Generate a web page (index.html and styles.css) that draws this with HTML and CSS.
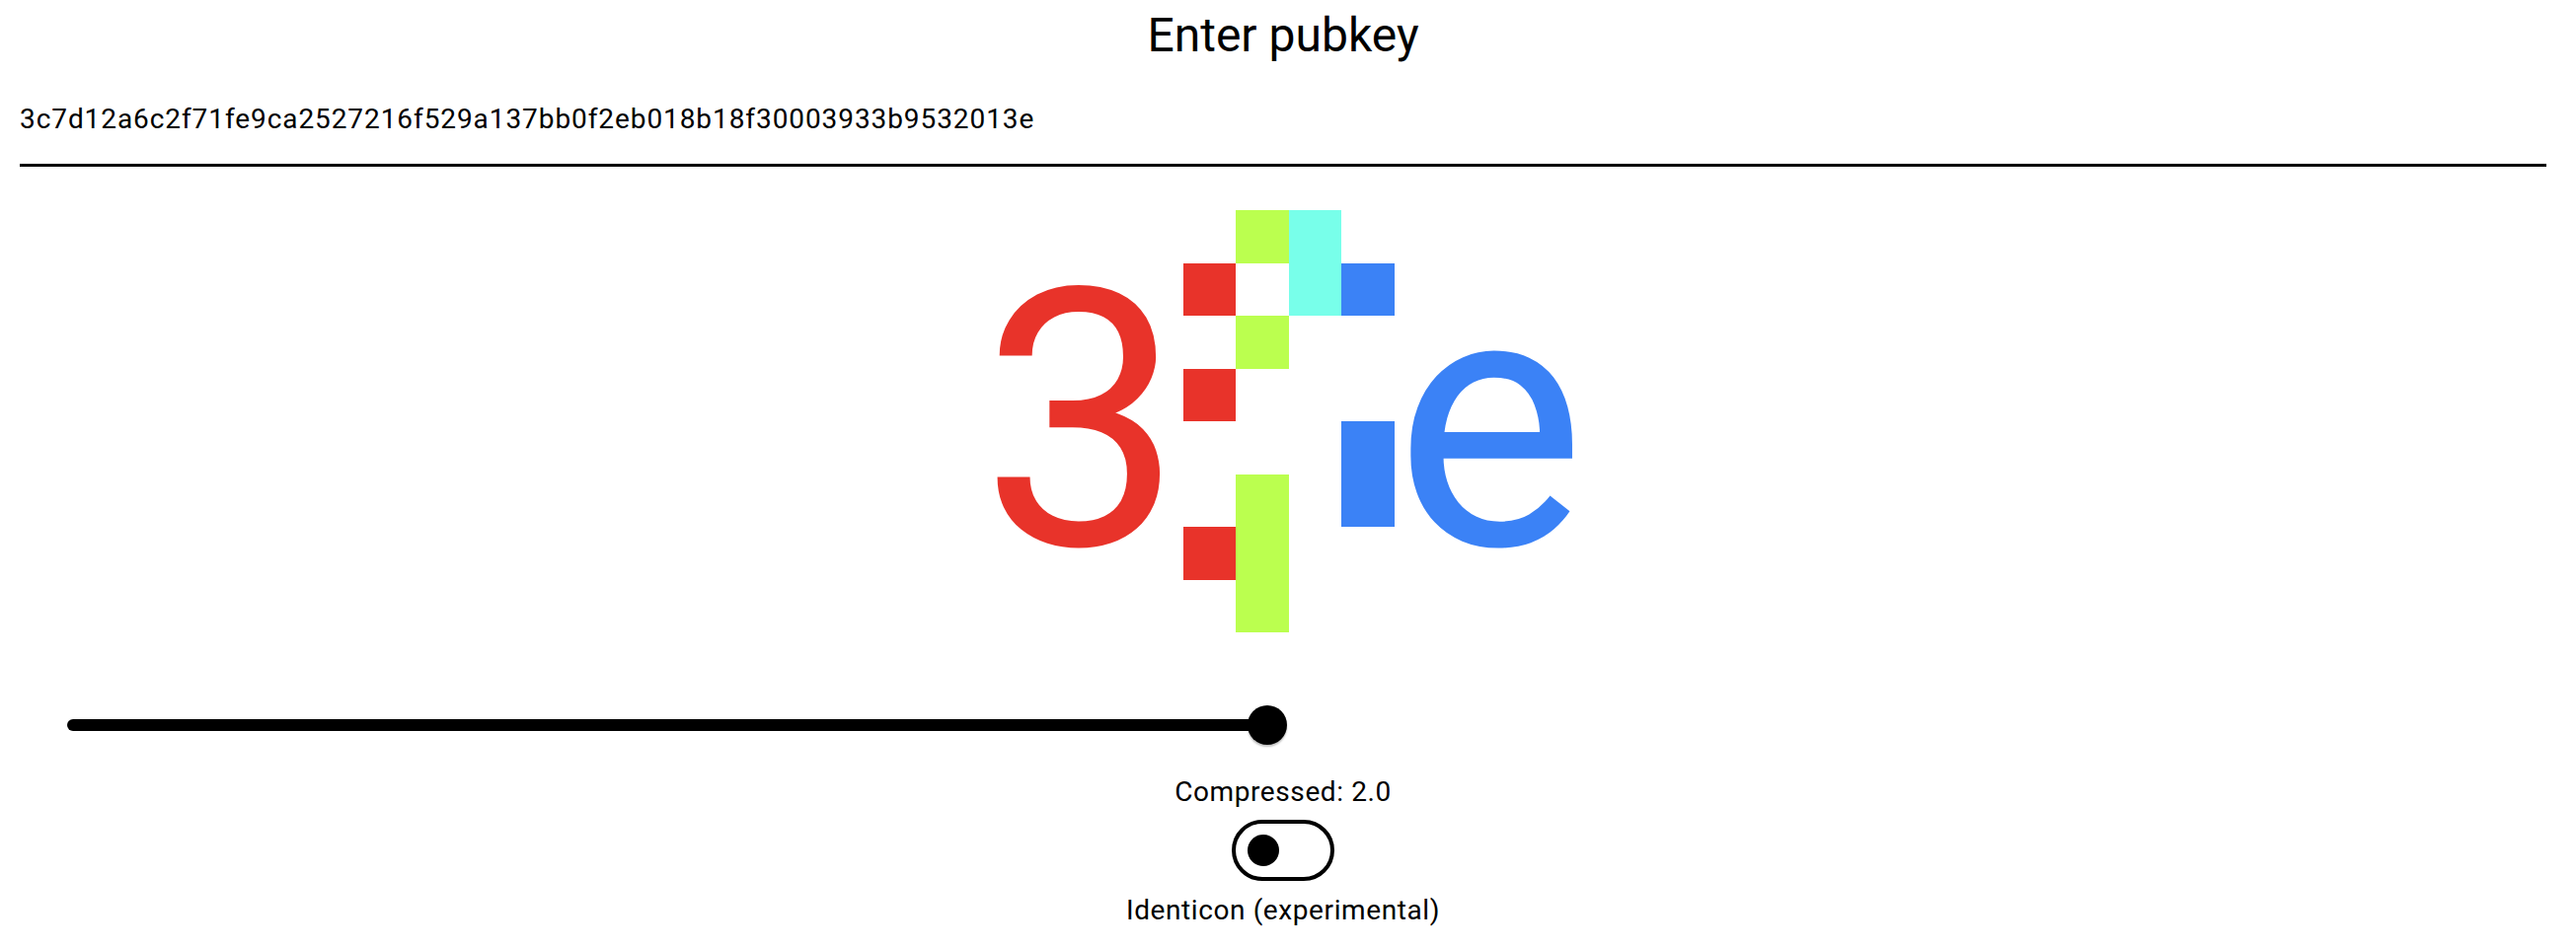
FILE: index.html
```html
<!DOCTYPE html>
<html lang="en">
<head>
<meta charset="utf-8">
<title>Enter pubkey</title>
<link rel="stylesheet" href="styles.css">
</head>
<body>
<div class="page">
  <h1 class="title">Enter pubkey</h1>
  <div class="field">3c7d12a6c2f71fe9ca2527216f529a137bb0f2eb018b18f30003933b9532013e</div>
  <div class="identicon">
    <span class="glyph red-text">3</span>
    <div class="grid">
      <div class="cell"></div><div class="cell lime"></div><div class="cell cyan"></div><div class="cell"></div>
      <div class="cell red"></div><div class="cell"></div><div class="cell cyan"></div><div class="cell blue"></div>
      <div class="cell"></div><div class="cell lime"></div><div class="cell"></div><div class="cell"></div>
      <div class="cell red"></div><div class="cell"></div><div class="cell"></div><div class="cell"></div>
      <div class="cell"></div><div class="cell"></div><div class="cell"></div><div class="cell blue"></div>
      <div class="cell"></div><div class="cell lime"></div><div class="cell"></div><div class="cell blue"></div>
      <div class="cell red"></div><div class="cell lime"></div><div class="cell"></div><div class="cell"></div>
      <div class="cell"></div><div class="cell lime"></div><div class="cell"></div><div class="cell"></div>
    </div>
    <span class="glyph blue-text">e</span>
  </div>
  <div class="slider">
    <div class="fill" style="width: 49.37%"></div>
    <div class="thumb"></div>
  </div>
  <div class="caption">Compressed: 2.0</div>
  <div class="toggle"><div class="knob"></div></div>
  <div class="caption label">Identicon (experimental)</div>
</div>
</body>
</html>
```
FILE: styles.css
```css
* { box-sizing: border-box; }

body {
  margin: 0;
  background: #fff;
  color: #000;
  font-family: Roboto, "Noto Sans", "Liberation Sans", sans-serif;
}

.page {
  display: flex;
  flex-direction: column;
  padding: 8px 30px 0 20px;
}

.title {
  margin: 0;
  font-size: 48px;
  font-weight: 400;
  line-height: 56px;
  text-align: center;
}

.field {
  margin-top: 40px;
  padding-bottom: 29px;
  border-bottom: 3px solid #000;
  font-size: 28px;
  line-height: 33px;
  letter-spacing: 0.92px;
}

.identicon {
  margin-top: 44px;
  display: flex;
  justify-content: center;
  font-size: 365px;
  line-height: 428px;
  height: 428px;
}

.glyph { display: block; }
.red-text { color: #e8332a; }
.blue-text { color: #3b82f6; }

.grid {
  display: grid;
  grid-template-columns: repeat(4, 53.5px);
  grid-template-rows: repeat(8, 53.5px);
}

.red { background: #e8332a; }
.lime { background: #bbff4f; }
.cyan { background: #78ffea; }
.blue { background: #3b82f6; }

.slider {
  margin: 74px 48px 0;
  height: 40px;
  display: flex;
  align-items: center;
}

.fill {
  height: 12px;
  background: #000;
  border-radius: 6px 0 0 6px;
}

.thumb {
  width: 40px;
  height: 40px;
  margin-left: -20px;
  border-radius: 50%;
  background: #000;
  box-shadow: 0 2px 2px rgba(0, 0, 0, 0.25);
}

.caption {
  margin-top: 31px;
  font-size: 28px;
  line-height: 33px;
  letter-spacing: 0.6px;
  text-align: center;
}

.toggle {
  margin-top: 12px;
  align-self: center;
  width: 104px;
  height: 62px;
  border: 4px solid #000;
  border-radius: 31px;
  display: flex;
  align-items: center;
  padding-left: 12px;
}

.knob {
  width: 32px;
  height: 32px;
  border-radius: 50%;
  background: #000;
}

.label {
  margin-top: 13px;
}
```
